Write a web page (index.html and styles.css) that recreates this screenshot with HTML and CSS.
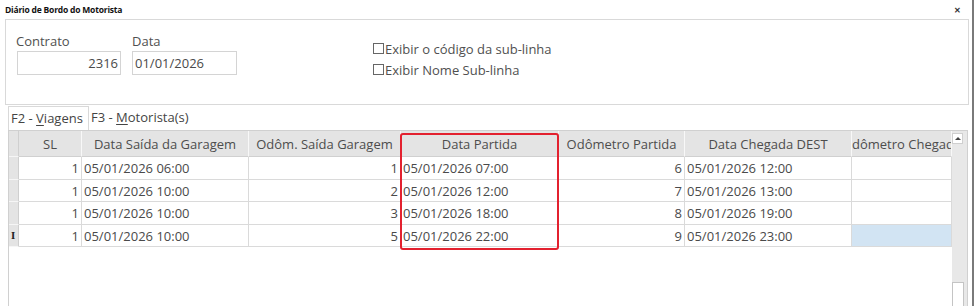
FILE: index.html
```html
<!DOCTYPE html>
<html lang="pt-BR">
<head>
  <meta charset="UTF-8" />
  <title>Diário de Bordo do Motorista</title>
  <link rel="stylesheet" href="styles.css">
</head>
<body>
  <div class="window">
    <div class="titlebar">
      <span class="title">Diário de Bordo do Motorista</span>
      <span class="close">✕</span>
    </div>

    <div class="group">
      <div class="field">
        <div class="label">Contrato</div>
        <div class="input num">2316</div>
      </div>
      <div class="field field-data">
        <div class="label">Data</div>
        <div class="input">01/01/2026</div>
      </div>
      <div class="checks">
        <div class="check"><span class="box"></span>Exibir o código da sub-linha</div>
        <div class="check"><span class="box"></span>Exibir Nome Sub-linha</div>
      </div>
    </div>

    <div class="tabs">
      <div class="tab active">F2 - <u>V</u>iagens</div>
      <div class="tab">F3 - <u>M</u>otorista(s)</div>
    </div>

    <div class="panel">
      <div class="grid">
        <div class="hd ind"></div>
        <div class="hd">SL</div>
        <div class="hd">Data Saída da Garagem</div>
        <div class="hd">Odôm. Saída Garagem</div>
        <div class="hd">Data Partida</div>
        <div class="hd">Odômetro Partida</div>
        <div class="hd">Data Chegada DEST</div>
        <div class="hd">Odômetro Chegada</div>

        <div class="ind"></div>
        <div class="c num">1</div>
        <div class="c">05/01/2026 06:00</div>
        <div class="c num">1</div>
        <div class="c">05/01/2026 07:00</div>
        <div class="c num">6</div>
        <div class="c">05/01/2026 12:00</div>
        <div class="c"></div>

        <div class="ind"></div>
        <div class="c num">1</div>
        <div class="c">05/01/2026 10:00</div>
        <div class="c num">2</div>
        <div class="c">05/01/2026 12:00</div>
        <div class="c num">7</div>
        <div class="c">05/01/2026 13:00</div>
        <div class="c"></div>

        <div class="ind"></div>
        <div class="c num">1</div>
        <div class="c">05/01/2026 10:00</div>
        <div class="c num">3</div>
        <div class="c">05/01/2026 18:00</div>
        <div class="c num">8</div>
        <div class="c">05/01/2026 19:00</div>
        <div class="c"></div>

        <div class="ind cursor">I</div>
        <div class="c num">1</div>
        <div class="c">05/01/2026 10:00</div>
        <div class="c num">5</div>
        <div class="c">05/01/2026 22:00</div>
        <div class="c num">9</div>
        <div class="c">05/01/2026 23:00</div>
        <div class="c selected"></div>
      </div>

      <div class="scrollbar">
        <div class="arrow-up"></div>
        <div class="thumb"></div>
      </div>

      <!-- red highlight drawn over the Data Partida column -->
      <div class="highlight"></div>
    </div>
  </div>
</body>
</html>
```

FILE: styles.css
```css
body {
  margin: 0;
  background: #fff;
  font-family: 'Open Sans', 'Noto Sans', sans-serif;
  color: #4a4a4a;
  overflow: hidden;
}
.window {
  width: 972px;
  height: 306px;
  border-right: 2px solid #7a7a7a;
  display: flex;
  flex-direction: column;
  overflow: hidden;
}
.window > div {
  flex-shrink: 0;
}
.titlebar {
  height: 19px;
  display: flex;
  justify-content: space-between;
  align-items: center;
  padding: 0 11px 0 5px;
  box-sizing: border-box;
}
.title {
  font-size: 8.5px;
  font-weight: bold;
  color: #111;
  letter-spacing: -0.2px;
}
.close {
  font-size: 8px;
  font-weight: bold;
  color: #333;
}
.group {
  margin: 0 3px 0 5px;
  height: 86px;
  box-sizing: border-box;
  border: 1px solid #d9d9d9;
  display: flex;
  padding: 12px 0 0 10px;
}
.field {
  display: flex;
  flex-direction: column;
}
.field-data {
  margin-left: 11px;
}
.label {
  font-size: 13px;
  line-height: 18px;
  height: 19px;
  color: #505050;
}
.input {
  width: 104px;
  height: 24px;
  box-sizing: border-box;
  border: 1px solid #d4d4d4;
  font-size: 13px;
  line-height: 22px;
  padding: 0 2px;
  color: #4a4a4a;
  margin-left: 1px;
}
.field-data .input {
  width: 105px;
  margin-left: 0;
}
.input.num {
  text-align: right;
}
.checks {
  margin-left: 136px;
  padding-top: 6px;
}
.check {
  display: flex;
  align-items: center;
  height: 21px;
  font-size: 13px;
  color: #505050;
}
.box {
  width: 9px;
  height: 9px;
  border: 1px solid #666;
  margin-right: 1px;
}
.tabs {
  display: flex;
  margin: 1px 0 0 8px;
  height: 24px;
}
.tab {
  font-size: 13px;
  line-height: 22px;
  padding: 0 3px 0 2px;
  color: #444;
  box-sizing: border-box;
}
.tab.active {
  border: 1px solid #d9d9d9;
  border-bottom: none;
  width: 81px;
  background: #fff;
}
.tab u {
  text-decoration-thickness: 1px;
  text-underline-offset: 2px;
}
.panel {
  position: relative;
  margin-left: 8px;
  width: 960px;
  height: 190px;
  box-sizing: border-box;
  border: 1px solid #d0d0d0;
  display: flex;
}
.grid {
  display: grid;
  grid-template-columns: 10px 63px 167px 152px 158px 126px 167px 100px;
  grid-template-rows: 26px 23px 22px 23px 22px;
  align-content: start;
  font-size: 13px;
  overflow: hidden;
  width: 943px;
}
.grid > div {
  box-sizing: border-box;
  border-right: 1px solid #dadada;
  border-bottom: 1px solid #dadada;
  white-space: nowrap;
  overflow: hidden;
  display: flex;
  align-items: center;
}
.grid .hd {
  background: #e4e4e4;
  border-right-color: #f8f8f8;
  border-bottom-color: #d0d0d0;
  justify-content: center;
  color: #4d4d4d;
}
.grid .ind {
  background: #e4e4e4;
  border-right-color: #cfcfcf;
  border-bottom-color: #f6f6f6;
}
.grid .cursor {
  font-family: 'DejaVu Serif', serif;
  font-weight: bold;
  font-size: 9px;
  color: #222;
  padding-left: 2px;
}
.c {
  padding: 0 2px;
}
.c.num {
  justify-content: flex-end;
}
.grid .selected {
  background: #d2e4f3;
}
.scrollbar {
  width: 15px;
  background: #e8e8e8;
  display: flex;
  flex-direction: column;
}
.arrow-up {
  width: 11px;
  height: 11px;
  margin-top: 2px;
  box-sizing: border-box;
  border: 1px solid #cfcfcf;
  background: #fff;
  position: relative;
}
.arrow-up::after {
  content: "";
  position: absolute;
  left: 2px;
  top: 3px;
  border-left: 3px solid transparent;
  border-right: 3px solid transparent;
  border-bottom: 3px solid #444;
}
.thumb {
  margin-top: auto;
  width: 12px;
  height: 37px;
  box-sizing: border-box;
  background: #fff;
  border: 1px solid #c4c4c4;
}
.highlight {
  position: absolute;
  left: 391px;
  top: 2px;
  width: 159px;
  height: 117px;
  box-sizing: border-box;
  border: 2px solid #e3212f;
  border-radius: 3px;
}
```
